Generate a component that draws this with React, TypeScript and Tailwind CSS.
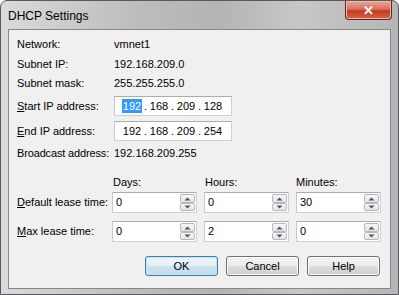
import React from "react";

const font = { fontFamily: '"Liberation Sans", Arial, sans-serif' };

function Arrow({ up }: { up?: boolean }) {
  return (
    <svg width="7" height="4" viewBox="0 0 7 4">
      {up ? (
        <path d="M0.5 3.5 L3.5 0.5 L6.5 3.5 Z" fill="#4b5563" />
      ) : (
        <path d="M0.5 0.5 L3.5 3.5 L6.5 0.5 Z" fill="#4b5563" />
      )}
    </svg>
  );
}

function Spin({ value }: { value: string }) {
  return (
    <div className="w-[85px] h-[21px] bg-white border border-[#cdd0d5] border-t-[#abadb3] border-l-[#c7c9cf] flex items-center pl-[3px] pr-[1px]">
      <span className="flex-1 text-[11px] leading-none">{value}</span>
      <div className="flex flex-col w-[15px] h-[17px] gap-0">
        <div className="h-[9px] border border-[#b5b8bd] rounded-[2px] bg-[linear-gradient(#f7f7f7,#e4e4e4)] flex items-center justify-center">
          <Arrow up />
        </div>
        <div className="h-[8px] border border-[#b5b8bd] rounded-[2px] bg-[linear-gradient(#f7f7f7,#e4e4e4)] flex items-center justify-center">
          <Arrow />
        </div>
      </div>
    </div>
  );
}

function IpBox({ parts, selectFirst }: { parts: string[]; selectFirst?: boolean }) {
  return (
    <div className="w-[118px] h-[20px] bg-white border border-[#cdd0d5] border-t-[#abadb3] border-l-[#c7c9cf] flex items-center pl-[7px] text-[11px]">
      {parts.map((p, i) => (
        <React.Fragment key={i}>
          {i > 0 && <span className="w-[7px] text-center">.</span>}
          <span
            className={
              "w-[20px] h-[14px] flex items-center justify-center " +
              (i === 0 && selectFirst ? "bg-[#3399ff] text-white" : "")
            }
          >
            {p}
          </span>
        </React.Fragment>
      ))}
    </div>
  );
}

function Btn({ label, def }: { label: string; def?: boolean }) {
  return (
    <div
      className={
        "w-[73px] h-[20px] rounded-[3px] border flex items-center justify-center text-[11px] " +
        (def
          ? "border-[#3c7fb1] bg-[linear-gradient(#eef6fb_0%,#e3eff7_50%,#cfe3f0_51%,#c4dcec_100%)] shadow-[inset_0_0_0_1px_#bfe3f7]"
          : "border-[#707070] bg-[linear-gradient(#f2f2f2_0%,#ebebeb_50%,#dddddd_51%,#cfcfcf_100%)] shadow-[inset_0_0_0_1px_#fbfbfb]")
      }
    >
      {label}
    </div>
  );
}

export default function App() {
  return (
    <div className="w-[399px] h-[295px] overflow-hidden bg-white" style={font}>
      <div className="w-[399px] h-[295px] rounded-t-[7px] border border-[#555a60] bg-[linear-gradient(to_right,#dadada,#bcbcbc_35%,#b4b4b4_55%,#c7c7c7_75%,#b6b6b6)] flex flex-col">
        <div className="h-[28px] flex justify-between items-start">
          <span className="pl-[7px] pt-[6px] text-[12px] text-black">DHCP Settings</span>
          <div className="mr-[6px] w-[47px] h-[19px] rounded-b-[4px] border border-t-0 border-[#6b2419] bg-[linear-gradient(#e9a99a,#d7725c_45%,#c63a1f_55%,#d4664b)] shadow-[inset_0_0_0_1px_#f0b8aa] flex items-center justify-center">
            <span className="text-white font-bold text-[13px] leading-none">✕</span>
          </div>
        </div>
        <div className="mx-[7px] h-[260px] border border-[#878787] bg-[#f0f0f0] text-black text-[11px] flex flex-col pl-[8px] pr-[10px]">
          <div className="mt-[4px] h-[20px] flex items-center">
            <span className="w-[97px]">Network:</span>
            <span>vmnet1</span>
          </div>
          <div className="h-[20px] flex items-center">
            <span className="w-[97px]">Subnet IP:</span>
            <span>192.168.209.0</span>
          </div>
          <div className="h-[18px] flex items-center">
            <span className="w-[97px]">Subnet mask:</span>
            <span>255.255.255.0</span>
          </div>
          <div className="mt-[4px] h-[20px] flex items-center">
            <span className="w-[97px]">
              <u>S</u>tart IP address:
            </span>
            <IpBox parts={["192", "168", "209", "128"]} selectFirst />
          </div>
          <div className="mt-[5px] h-[20px] flex items-center">
            <span className="w-[97px]">
              <u>E</u>nd IP address:
            </span>
            <IpBox parts={["192", "168", "209", "254"]} />
          </div>
          <div className="mt-[2px] h-[20px] flex items-center">
            <span className="w-[97px] tracking-[-0.15px] whitespace-nowrap">Broadcast address:</span>
            <span>192.168.209.255</span>
          </div>
          <div className="mt-[10px] grid grid-cols-[88px_85px_85px_85px] gap-x-[7px] items-center">
            <span className="h-[18px]" />
            <span className="h-[18px] flex items-center pl-[1px]">Days:</span>
            <span className="h-[18px] flex items-center pl-[1px]">Hours:</span>
            <span className="h-[18px] flex items-center">Minutes:</span>
            <span className="mt-[1px] whitespace-nowrap">
              <u>D</u>efault lease time:
            </span>
            <div className="mt-[1px]">
              <Spin value="0" />
            </div>
            <div className="mt-[1px]">
              <Spin value="0" />
            </div>
            <div className="mt-[1px]">
              <Spin value="30" />
            </div>
            <span className="mt-[8px] whitespace-nowrap">
              <u>M</u>ax lease time:
            </span>
            <div className="mt-[8px]">
              <Spin value="0" />
            </div>
            <div className="mt-[8px]">
              <Spin value="2" />
            </div>
            <div className="mt-[8px]">
              <Spin value="0" />
            </div>
          </div>
          <div className="mt-[14px] flex justify-end gap-[8px]">
            <Btn label="OK" def />
            <Btn label="Cancel" />
            <Btn label="Help" />
          </div>
        </div>
      </div>
    </div>
  );
}
